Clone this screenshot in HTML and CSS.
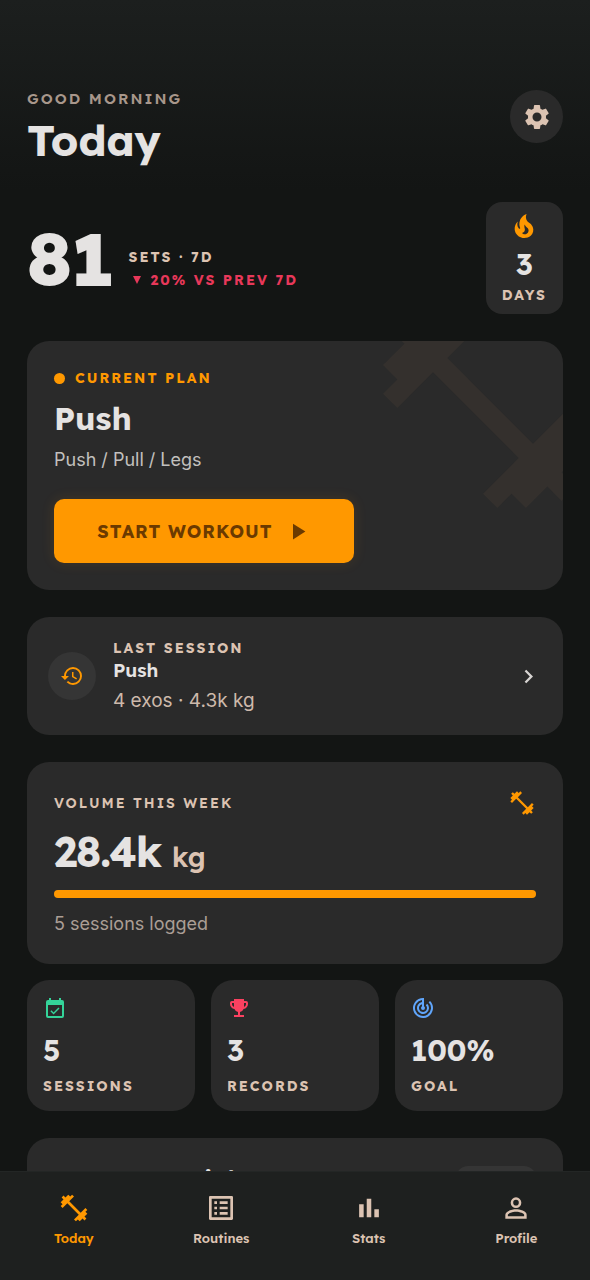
FILE: index.html
```html
<!DOCTYPE html>
<html lang="en">
<head>
<meta charset="utf-8">
<meta name="viewport" content="width=device-width, initial-scale=1">
<title>Today</title>
<link rel="stylesheet" href="styles.css">
</head>
<body>
<svg class="sprite" aria-hidden="true">
  <symbol id="dumbbell" viewBox="0 0 24 24"><path d="M20.57 14.86L22 13.43 20.57 12 17 15.57 8.43 7 12 3.43 10.57 2 9.14 3.43 7.71 2 5.57 4.14 4.14 2.71 2.71 4.14l1.43 1.43L2 7.71l1.43 1.43L2 10.57 3.43 12 7 8.43 15.57 17 12 20.57 13.43 22l1.43-1.43L16.29 22l2.14-2.14 1.43 1.43 1.43-1.43-1.43-1.43L22 16.29z"/></symbol>
</svg>
<div class="app">
  <main class="content">
    <header class="header">
      <div>
        <p class="label greeting">GOOD MORNING</p>
        <h1 class="title">Today</h1>
      </div>
      <button class="settings" type="button" aria-label="Settings">
        <svg class="gear" viewBox="0 0 24 24"><path d="M19.14 12.94c.04-.3.06-.61.06-.94s-.02-.64-.07-.94l2.03-1.58a.49.49 0 0 0 .12-.61l-1.92-3.32a.49.49 0 0 0-.59-.22l-2.39.96c-.5-.38-1.03-.7-1.62-.94l-.36-2.54a.48.48 0 0 0-.48-.41h-3.84c-.24 0-.43.17-.47.41l-.36 2.54c-.59.24-1.13.57-1.62.94l-2.39-.96a.48.48 0 0 0-.59.22L2.74 8.87a.47.47 0 0 0 .12.61l2.03 1.58c-.05.3-.09.63-.09.94s.02.64.07.94l-2.03 1.58a.49.49 0 0 0-.12.61l1.92 3.32c.12.22.37.29.59.22l2.39-.96c.5.38 1.03.7 1.62.94l.36 2.54c.05.24.24.41.48.41h3.84c.24 0 .44-.17.47-.41l.36-2.54c.59-.24 1.13-.56 1.62-.94l2.39.96c.22.08.47 0 .59-.22l1.92-3.32a.47.47 0 0 0-.12-.61zM12 15.6a3.6 3.6 0 1 1 0-7.2 3.6 3.6 0 0 1 0 7.2z"/></svg>
      </button>
    </header>

    <section class="summary">
      <div class="sets">
        <span class="sets-value">81</span>
        <div class="sets-notes">
          <p class="label">SETS · 7D</p>
          <p class="label trend"><svg class="trend-arrow" viewBox="0 0 10 10"><path d="M1 1h8L5 9z"/></svg>20% VS PREV 7D</p>
        </div>
      </div>
      <div class="streak">
        <svg class="flame" viewBox="0 0 24 24"><path d="M17.66 11.2c-.23-.3-.51-.56-.77-.82-.67-.6-1.43-1.03-2.07-1.66C13.33 7.26 13 4.85 13.95 3c-.95.23-1.78.75-2.49 1.32-2.59 2.08-3.61 5.75-2.39 8.9.04.1.08.2.08.33 0 .22-.15.42-.35.5-.23.1-.47.04-.66-.12a.58.58 0 0 1-.14-.17c-1.13-1.43-1.31-3.48-.55-5.12C5.78 10 4.87 12.3 5 14.47c.06.5.12 1 .29 1.5.14.6.41 1.2.71 1.73 1.08 1.73 2.95 2.97 4.96 3.22 2.14.27 4.43-.12 6.07-1.6 1.83-1.66 2.47-4.32 1.53-6.6l-.13-.26c-.21-.46-.77-1.26-.77-1.26m-3.16 6.3c-.28.24-.74.5-1.1.6-1.12.4-2.24-.16-2.9-.82 1.19-.28 1.9-1.16 2.11-2.05.17-.8-.15-1.46-.28-2.23-.12-.74-.1-1.37.17-2.06.19.38.39.76.63 1.06.77 1 1.98 1.44 2.24 2.8.04.14.06.28.06.43.03.82-.33 1.72-.93 2.27z"/></svg>
        <span class="number">3</span>
        <span class="label">DAYS</span>
      </div>
    </section>

    <section class="card plan">
      <svg class="plan-art" aria-hidden="true"><use href="#dumbbell"/></svg>
      <p class="label plan-label"><span class="dot"></span>CURRENT PLAN</p>
      <h2 class="plan-name">Push</h2>
      <p class="text plan-split">Push / Pull / Legs</p>
      <button class="start" type="button">START WORKOUT
        <svg class="play" viewBox="0 0 24 24"><path d="M8 5v14l11-7z"/></svg>
      </button>
    </section>

    <a class="card session" href="#session">
      <span class="session-icon">
        <svg class="icon" viewBox="0 0 24 24"><path d="M13 3a9 9 0 0 0-9 9H1l3.89 3.89.07.14L9 12H6c0-3.87 3.13-7 7-7s7 3.13 7 7-3.13 7-7 7c-1.93 0-3.68-.79-4.94-2.06l-1.42 1.42A8.95 8.95 0 0 0 13 21a9 9 0 0 0 0-18zm-1 5v5l4.28 2.54.72-1.21-3.5-2.08V8z"/></svg>
      </span>
      <span class="session-info">
        <span class="label">LAST SESSION</span>
        <span class="session-name">Push</span>
        <span class="text">4 exos · 4.3k kg</span>
      </span>
      <svg class="chevron" viewBox="0 0 24 24"><path d="M8.59 16.59L13.17 12 8.59 7.41 10 6l6 6-6 6z"/></svg>
    </a>

    <section class="card volume">
      <div class="volume-head">
        <h2 class="label">VOLUME THIS WEEK</h2>
        <svg class="volume-icon"><use href="#dumbbell"/></svg>
      </div>
      <p class="volume-value">28.4k <span class="unit">kg</span></p>
      <div class="bar"><div class="bar-fill" style="width: 100%"></div></div>
      <p class="text muted">5 sessions logged</p>
    </section>

    <section class="stats">
      <div class="card stat">
        <svg class="icon green" viewBox="0 0 24 24"><path d="M19 4h-1V2h-2v2H8V2H6v2H5a2 2 0 0 0-2 2v14a2 2 0 0 0 2 2h14a2 2 0 0 0 2-2V6a2 2 0 0 0-2-2zm0 16H5V9h14zm-8.440-1.500l5.940-5.930-1.060-1.060-4.880 4.870-2.110-2.110-1.060 1.060z"/></svg>
        <span class="number">5</span>
        <span class="label">SESSIONS</span>
      </div>
      <div class="card stat">
        <svg class="icon red" viewBox="0 0 24 24"><path d="M19 5h-2V3H7v2H5a2 2 0 0 0-2 2v1c0 2.550 1.920 4.630 4.390 4.940A5 5 0 0 0 11 15.900V19H7v2h10v-2h-4v-3.100a5 5 0 0 0 3.610-2.960C19.080 12.630 21 10.550 21 8V7a2 2 0 0 0-2-2zM5 8V7h2v3.820C5.840 10.400 5 9.300 5 8zm14 0c0 1.300-.84 2.400-2 2.820V7h2z"/></svg>
        <span class="number">3</span>
        <span class="label">RECORDS</span>
      </div>
      <div class="card stat">
        <svg class="icon blue" viewBox="0 0 24 24"><path d="M19.070 4.930l-1.410 1.410A8 8 0 1 1 11 4.070v2.020a6 6 0 1 0 5.240 1.670l-1.410 1.410A4 4 0 1 1 11 8.140v2.140c-.6.350-1 .980-1 1.720a2 2 0 1 0 4 0c0-.740-.4-1.380-1-1.720V2h-1a10 10 0 1 0 7.070 2.930z"/></svg>
        <span class="number">100%</span>
        <span class="label">GOAL</span>
      </div>
    </section>

    <section class="card weight">
      <h2 class="weight-title">Max weight</h2>
      <span class="pill"></span>
    </section>
  </main>

  <nav class="nav">
    <a class="nav-item active" href="#today" aria-current="page">
      <svg class="nav-icon"><use href="#dumbbell"/></svg>Today</a>
    <a class="nav-item" href="#routines">
      <svg class="nav-icon" viewBox="0 0 24 24"><path d="M11 7h6v2h-6zm0 4h6v2h-6zm0 4h6v2h-6zM7 7h2v2H7zm0 4h2v2H7zm0 4h2v2H7zM20.100 3H3.900c-.5 0-.9.400-.9.900v16.200c0 .400.400.900.900.900h16.200c.400 0 .900-.500.900-.900V3.900c0-.5-.5-.9-.9-.9zM19 19H5V5h14z"/></svg>Routines</a>
    <a class="nav-item" href="#stats">
      <svg class="nav-icon" viewBox="0 0 24 24"><path d="M4.600 9.200H8V19H4.600zM10.300 5h3.400v14h-3.400zM16 13h3.400v6H16z"/></svg>Stats</a>
    <a class="nav-item" href="#profile">
      <svg class="nav-icon" viewBox="0 0 24 24"><path d="M12 5.900a2.100 2.100 0 1 1 0 4.200 2.100 2.100 0 0 1 0-4.200m0 9c2.970 0 6.100 1.460 6.100 2.100v1.100H5.900V17c0-.640 3.130-2.100 6.100-2.100M12 4a4 4 0 1 0 0 8 4 4 0 0 0 0-8zm0 9c-2.670 0-8 1.340-8 4v3h16v-3c0-2.660-5.330-4-8-4z"/></svg>Profile</a>
  </nav>
</div>
</body>
</html>
```

FILE: styles.css
```css
:root {
  --bg: #131514;
  --card: #2a2a2a;
  --raised: #353535;
  --text: #e5e3e2;
  --tan: #dcc3b2;
  --accent: #ff9800;
  --display: "Lexend", "Inter", "Noto Sans", sans-serif;
  --body: "Inter", "Noto Sans", sans-serif;
}

* { box-sizing: border-box; }

body, h1, h2, p { margin: 0; }

body {
  background: var(--bg);
  color: var(--text);
  font-family: var(--display);
}

button { border: 0; font-family: inherit; cursor: pointer; }
a { color: inherit; text-decoration: none; }
svg { display: block; flex: none; fill: currentColor; }

.sprite { position: absolute; width: 0; height: 0; }

.app {
  display: flex;
  flex-direction: column;
  height: 100vh;
  background: linear-gradient(#1c1f1e, var(--bg) 190px);
}

.content {
  flex: 1;
  min-height: 0;
  overflow-y: auto;
  scrollbar-width: none;
  padding: 90px 27px 0;
}

.label {
  color: var(--tan);
  font-size: 14px;
  font-weight: 700;
  line-height: 20px;
  letter-spacing: 2px;
}

.text {
  font-family: var(--body);
  font-size: 19px;
  line-height: 26px;
  color: #c8bbb2;
}

.number { font-size: 29px; font-weight: 700; line-height: 36px; }
.icon { width: 24px; height: 24px; }
.card { background: var(--card); border-radius: 22px; }

.header {
  display: flex;
  justify-content: space-between;
  align-items: flex-start;
  margin-bottom: 30px;
}

.greeting { color: #a8978b; font-size: 15px; font-weight: 600; line-height: 18px; }
.title { font-size: 43px; font-weight: 700; line-height: 64px; }

.settings {
  display: grid;
  place-items: center;
  width: 53px;
  height: 53px;
  padding: 0;
  border-radius: 50%;
  background: var(--card);
  color: var(--tan);
}
.gear { width: 30px; height: 30px; }

.summary {
  display: flex;
  justify-content: space-between;
  align-items: center;
  margin-bottom: 27px;
}

.sets { display: flex; align-items: flex-end; gap: 15px; padding-top: 2px; }
.sets-value { font-size: 74px; font-weight: 800; line-height: 78px; letter-spacing: -1px; }
.sets-notes { display: grid; gap: 3px; padding-bottom: 8px; }
.trend { display: flex; align-items: center; gap: 9px; color: #e8385a; }
.trend-arrow { width: 10px; height: 10px; margin-left: 3px; }

.streak {
  display: flex;
  flex-direction: column;
  align-items: center;
  padding: 8px 16px 9px;
  border-radius: 16px;
  background: var(--card);
}
.streak .number { margin: 4px 0 3px; }
.flame { width: 32px; height: 32px; color: var(--accent); }

.plan {
  position: relative;
  overflow: hidden;
  padding: 27px;
  margin-bottom: 27px;
}

.plan-art {
  position: absolute;
  top: -53px;
  right: -40px;
  width: 240px;
  height: 240px;
  color: #34302d;
}

.plan-label { display: flex; align-items: center; gap: 10px; color: var(--accent); }
.dot { width: 11px; height: 11px; border-radius: 50%; background: var(--accent); }
.plan-name { margin: 10px 0 9px; font-size: 32px; font-weight: 700; line-height: 40px; }
.plan-split { margin-bottom: 26px; font-size: 18px; color: #c2c0be; }

.start {
  display: flex;
  align-items: center;
  justify-content: center;
  gap: 11px;
  width: 300px;
  max-width: 100%;
  height: 64px;
  border-radius: 10px;
  background: var(--accent);
  box-shadow: 0 0 14px rgba(255, 152, 0, 0.12);
  color: #6b3a00;
  font-size: 18px;
  font-weight: 700;
  letter-spacing: 1px;
}
.play { width: 27px; height: 27px; }

.session {
  display: flex;
  align-items: center;
  gap: 17px;
  padding: 21px;
  margin-bottom: 27px;
}
.session-icon {
  display: grid;
  place-items: center;
  width: 48px;
  height: 48px;
  border-radius: 50%;
  background: var(--raised);
  color: var(--accent);
}
.session-info { display: flex; flex: 1; flex-direction: column; }
.session-name { margin-bottom: 6px; font-size: 19px; font-weight: 600; line-height: 24px; }
.session .text { color: #cdb9ab; }
.chevron { width: 27px; height: 27px; color: #d8d5d3; }

.volume { padding: 27px; margin-bottom: 16px; }
.volume-head { display: flex; justify-content: space-between; align-items: center; }
.volume-head .label { font-weight: 600; }
.volume-icon { width: 28px; height: 28px; color: var(--accent); }
.volume-value {
  display: flex;
  align-items: baseline;
  gap: 11px;
  height: 52px;
  margin: 9px 0 12px;
  font-size: 42px;
  font-weight: 700;
  line-height: 52px;
  letter-spacing: -1px;
}
.unit { color: var(--tan); font-size: 27px; font-weight: 600; letter-spacing: 0; }
.bar { height: 8px; border-radius: 4px; background: var(--raised); }
.bar-fill { height: 100%; border-radius: inherit; background: var(--accent); }
.muted { margin-top: 13px; font-size: 18px; color: #ab9e95; }

.stats {
  display: grid;
  grid-template-columns: repeat(3, 1fr);
  gap: 16px;
  margin-bottom: 27px;
}
.stat { display: flex; flex-direction: column; padding: 16px 16px 15px; }
.stat .number { margin: 12px 0 8px; }
.green { color: #34d399; }
.red { color: #fb4160; }
.blue { color: #60a5fa; }

.weight {
  display: flex;
  justify-content: space-between;
  align-items: flex-start;
  padding: 25px 27px 27px 86px;
}
.weight-title { font-size: 24px; font-weight: 600; line-height: 32px; }
.pill { width: 80px; height: 32px; margin-top: 3px; border-radius: 12px; background: var(--raised); }

.nav {
  display: grid;
  grid-template-columns: repeat(4, 1fr);
  padding: 20px 0 32px;
  border-top: 1px solid #232625;
  background: #1e201f;
}
.nav-item {
  display: flex;
  flex-direction: column;
  align-items: center;
  gap: 4px;
  color: var(--tan);
  font-size: 13px;
  font-weight: 600;
  line-height: 20px;
}
.nav-icon { width: 32px; height: 32px; }
.active { color: var(--accent); }
```
